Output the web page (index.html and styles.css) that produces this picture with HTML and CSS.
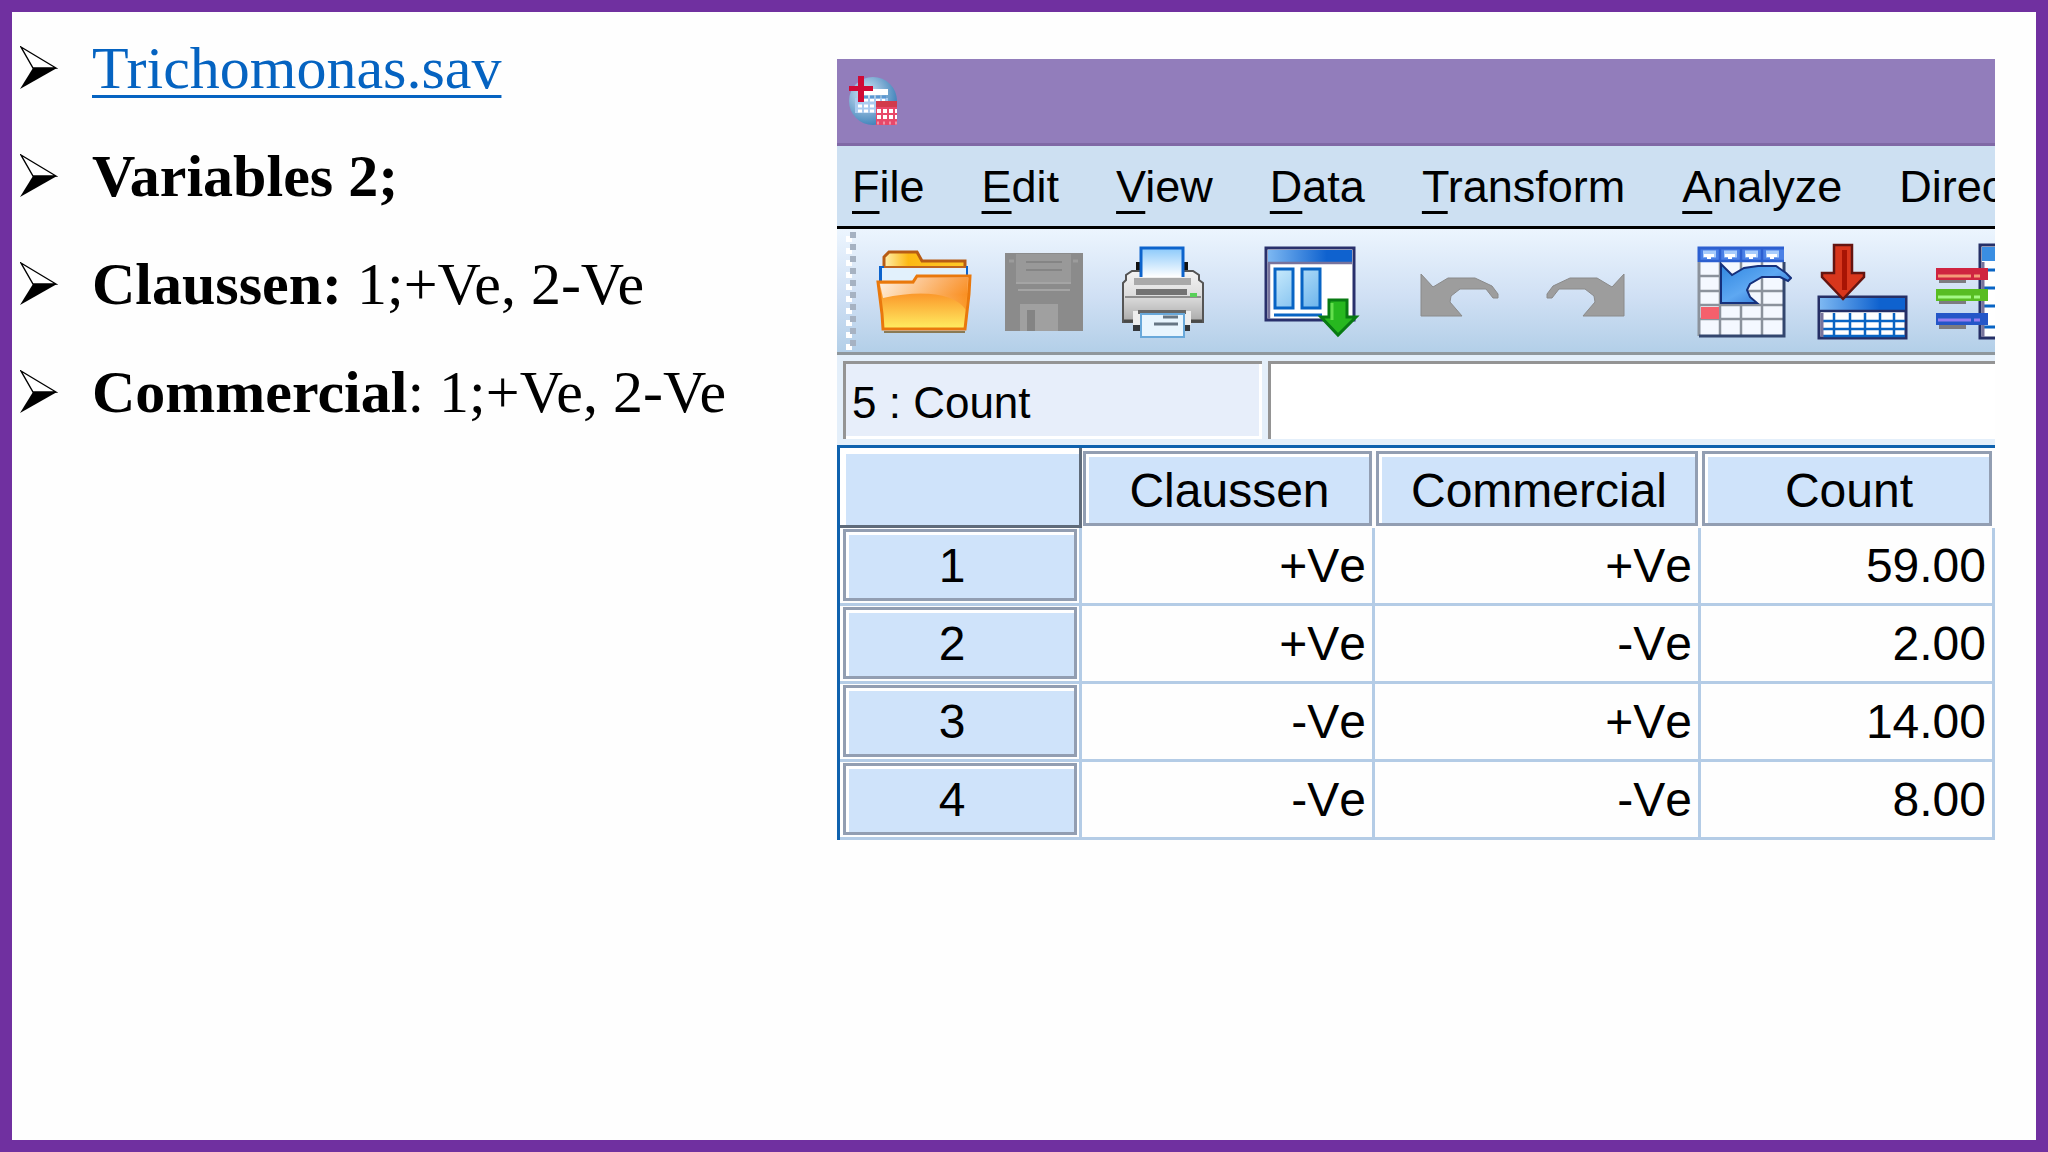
FILE: index.html
```
<!DOCTYPE html>
<html lang="en">
<head>
<meta charset="utf-8">
<title>Trichomonas.sav</title>
<link rel="stylesheet" href="styles.css">
</head>
<body>
<svg class="defs" aria-hidden="true">
  <defs>
    <symbol id="arrowhead" viewBox="0 0 38 44">
      <path d="M1 1L36 22H13Z" fill="#fff" stroke="#000" stroke-width="1.4"/>
      <path d="M13 22H37L0 43Z" fill="#000"/>
    </symbol>
    <linearGradient id="folder" x1="0" y1="0" x2="0" y2="1"><stop offset="0" stop-color="#fbc9a0"/><stop offset=".35" stop-color="#fb9a2c"/><stop offset="1" stop-color="#ffee62"/></linearGradient>
    <linearGradient id="shine" x1="0" y1="0" x2="1" y2="0"><stop offset="0" stop-color="#fff" stop-opacity=".75"/><stop offset="1" stop-color="#f98a1c" stop-opacity=".7"/></linearGradient>
    <linearGradient id="tab" x1="0" y1="0" x2="1" y2="0"><stop offset="0" stop-color="#fff0b0"/><stop offset=".3" stop-color="#fdb913"/><stop offset="1" stop-color="#ffc928"/></linearGradient>
    <linearGradient id="paper" x1="0" y1="0" x2="0" y2="1"><stop offset="0" stop-color="#8fcbfb"/><stop offset="1" stop-color="#fff"/></linearGradient>
    <linearGradient id="metal" x1="0" y1="0" x2="0" y2="1"><stop offset="0" stop-color="#f4f4f4"/><stop offset=".5" stop-color="#dcdcdc"/><stop offset="1" stop-color="#a9a9a9"/></linearGradient>
    <linearGradient id="bar" x1="0" y1="0" x2="1" y2="0"><stop offset="0" stop-color="#7db8f2"/><stop offset=".7" stop-color="#0f62cf"/></linearGradient>
    <linearGradient id="pane" x1="0" y1="0" x2="1" y2="1"><stop offset="0" stop-color="#c8eafc"/><stop offset="1" stop-color="#6cb4ec"/></linearGradient>
    <linearGradient id="swoop" x1="0" y1="0" x2="1" y2="1"><stop offset="0" stop-color="#2f86e0"/><stop offset=".5" stop-color="#5ea8f2"/><stop offset="1" stop-color="#1c62c8"/></linearGradient>
    <radialGradient id="globe" cx=".35" cy=".35" r=".7"><stop offset="0" stop-color="#d6e8f6"/><stop offset="1" stop-color="#3a7fb8"/></radialGradient>
  </defs>
</svg>
<main class="slide">
  <ul class="notes">
    <li><svg class="bullet" aria-hidden="true"><use href="#arrowhead"/></svg><span><a href="Trichomonas.sav">Trichomonas.sav</a></span></li>
    <li><svg class="bullet" aria-hidden="true"><use href="#arrowhead"/></svg><span><b>Variables 2;</b></span></li>
    <li><svg class="bullet" aria-hidden="true"><use href="#arrowhead"/></svg><span><b>Claussen:</b> 1;+Ve, 2-Ve</span></li>
    <li><svg class="bullet" aria-hidden="true"><use href="#arrowhead"/></svg><span><b>Commercial</b>: 1;+Ve, 2-Ve</span></li>
  </ul>

  <section class="window">
    <header class="titlebar">
      <svg width="48" height="50" viewBox="0 0 48 50" aria-hidden="true">
        <circle cx="24" cy="25" r="24" fill="url(#globe)"/>
        <path d="M6 22H39V37H6Z" fill="#a9cbf0"/>
        <path d="M15 13H39V19H15Z" fill="#fff"/>
        <path d="M9 24H36M9 30H30M9 35H26" stroke="#fff" stroke-width="3" stroke-dasharray="4 2"/>
        <path d="M15 21H37" stroke="#5b97d2" stroke-width="3" stroke-dasharray="4 2"/>
        <path d="M0 10H9V0H15V10H24V15H15V26H9V15H0Z" fill="#d00a35"/>
        <path d="M27 25H48V49H27Z" fill="#e8486a"/>
        <path d="M27 25H48V31H27Z" fill="#d23a4c"/>
        <path d="M28 35H48M28 41H48" stroke="#fff" stroke-width="4" stroke-dasharray="4 2"/>
        <path d="M28 47H48" stroke="#fff" stroke-opacity=".4" stroke-width="3" stroke-dasharray="2 4"/>
      </svg>
    </header>
    <nav class="menubar">
      <button type="button"><u>F</u>ile</button>
      <button type="button"><u>E</u>dit</button>
      <button type="button"><u>V</u>iew</button>
      <button type="button"><u>D</u>ata</button>
      <button type="button"><u>T</u>ransform</button>
      <button type="button"><u>A</u>nalyze</button>
      <button type="button">Direct</button>
    </nav>
    <div class="toolbar">
      <span class="grip"></span>
      <div class="group">
        <button type="button" aria-label="Open"><svg viewBox="0 0 96 100">
          <path d="M8 29V17L13 12H41L46 21H89V29Z" fill="url(#tab)" stroke="#b85c14" stroke-width="3"/>
          <path d="M3 26H92V42H3Z" fill="#0c63cc"/><path d="M6 28H90V46H6Z" fill="#e2f1fc"/>
          <path d="M8 27H90" stroke="#c0651c" stroke-width="2"/>
          <path d="M8 92H89" stroke="#8a7a55" stroke-width="2"/>
          <path d="M2 42H37L41 36H94L93 54L89 89H7L6 74Z" fill="url(#folder)" stroke="#e9780c" stroke-width="3"/>
          <path d="M4 44H38L42 38H92L90 70C78 52 44 50 7 58Z" fill="url(#shine)"/>
        </svg></button>
        <button type="button" aria-label="Save" disabled><svg viewBox="0 0 96 100">
          <path d="M9 13H87V91H9Z" fill="#8b8b8b"/>
          <path d="M20 14H75V43H20Z" fill="#999"/><path d="M20 43H75M22 50H74" stroke="#a4a4a4" stroke-width="2"/>
          <path d="M30 22H66M30 30H66" stroke="#858585" stroke-width="2"/>
          <path d="M13 21H18M77 21H82" stroke="#9c9c9c" stroke-width="3"/>
          <path d="M24 64H62V91H24Z" fill="#a0a0a0"/><path d="M31 70H39V91H31Z" fill="#848484"/>
        </svg></button>
        <button type="button" aria-label="Print"><svg viewBox="0 0 96 100">
          <path d="M20 22H72V34H20Z" fill="#111"/>
          <path d="M7 43L10 40V35L16 31H77L83 35V40L87 43V82H7Z" fill="url(#metal)" stroke="#555" stroke-width="2"/>
          <path d="M18 38H75V45H18Z" fill="#a9a9a9"/>
          <path d="M25 9H67V37H25Z" fill="url(#paper)"/><path d="M25 37V8H67V37" fill="none" stroke="#0c63cc" stroke-width="3"/>
          <path d="M20 49H71V55H20Z" fill="#737373"/><path d="M9 57H85" stroke="#8e8e8e" stroke-width="2"/>
          <path d="M74 53H81V57H74Z" fill="#58d058"/>
          <path d="M8 81H86" stroke="#4a4a48" stroke-width="3"/>
          <path d="M17 71H75V85H17Z" fill="#eee"/><path d="M22 70H70V74H22Z" fill="#666"/>
          <path d="M17 85H24V91H17ZM68 85H74V91H68Z" fill="#34383c"/>
          <path d="M25 74H68V97H25Z" fill="#e8f5fe" stroke="#68a8da" stroke-width="2"/>
          <path d="M47 77H62M38 84H62" stroke="#667684" stroke-width="3"/>
        </svg></button>
      </div>
      <div class="group">
        <button type="button" aria-label="Recall dialog"><svg viewBox="0 0 96 100">
          <path d="M2 8H90V80H2Z" fill="#fff" stroke="#29306c" stroke-width="3"/>
          <path d="M4 10H88V22H4Z" fill="url(#bar)"/><path d="M4 23H88M5 23V79" stroke="#77739c" stroke-width="2.5"/>
          <path d="M11 29H29V68H11ZM38 29H56V68H38Z" fill="url(#pane)" stroke="#0864c4" stroke-width="3"/>
          <path d="M10 75H58" stroke="#0864c4" stroke-width="3"/>
          <path d="M65 60H83V77H92L74 95L57 77H65Z" fill="#27b81f" stroke="#087a12" stroke-width="3"/>
          <path d="M68 63V80" stroke="#63df4d" stroke-width="3"/>
        </svg></button>
      </div>
      <div class="group history">
        <button type="button" aria-label="Undo" disabled><svg viewBox="0 0 96 100">
          <path d="M5 34L17 47L32 38H59L76 46L82 54V58H77L70 49H44L35 56L34 62L46 76H5Z" fill="#9d9d9d" stroke="#8a8a8a"/>
        </svg></button>
        <button type="button" aria-label="Redo" disabled><svg viewBox="0 0 96 100">
          <path d="M88 34L76 47L61 38H34L17 46L11 54V58H16L23 49H49L58 56L59 62L47 76H88Z" fill="#9d9d9d" stroke="#8a8a8a"/>
        </svg></button>
      </div>
      <div class="group">
        <button type="button" aria-label="Go to case"><svg viewBox="0 0 96 100">
          <path d="M3 8H88V96H3Z" fill="#f4f8ff"/><path d="M3 8H88V22H3Z" fill="#4a80e6"/>
          <path d="M7 14H20M28 14H41M49 14H62M70 14H83" stroke="#a9cdfb" stroke-width="7"/>
          <path d="M8 14H18V17H15V19H11V17H8ZM29 14H39V17H36V19H32V17H29ZM50 14H60V17H57V19H53V17H50ZM71 14H81V17H78V19H74V17H71Z" fill="#fff"/>
          <path d="M24 22V96M45 22V96M66 22V96M3 36H88M3 51H88M3 65H88M3 79H88" stroke="#8b929c" stroke-width="2.5"/>
          <path d="M24 8V22M45 8V22M66 8V22M3 21H88" stroke="#2c5fd0" stroke-width="2.5"/>
          <path d="M5 67H23V79H5Z" fill="#f4606c"/>
          <path d="M3 96V22" stroke="#8b929c" stroke-width="3"/><path d="M3 22V8H88" fill="none" stroke="#2c5fd0" stroke-width="3"/>
          <path d="M88 22V96H3" fill="none" stroke="#33466e" stroke-width="3"/>
          <path d="M25 24L36 35L48 28L62 26H80L90 33L95 38L92 41L84 37L66 37L54 44L51 50L54 57L61 63H25Z" fill="url(#swoop)" stroke="#15307c" stroke-width="2"/>
        </svg></button>
        <button type="button" aria-label="Go to variable"><svg viewBox="0 0 96 100">
          <path d="M3 57H90V98H3Z" fill="#fff" stroke="#252f66" stroke-width="3"/>
          <path d="M4 58H89V70H4Z" fill="url(#bar)"/><path d="M4 71H89" stroke="#252f66" stroke-width="2.5"/>
          <path d="M18 73V97M34 73V97M49 73V97M64 73V97M78 73V97M7 81H89M7 89H89M7 96H89" stroke="#0864c4" stroke-width="2.5"/>
          <path d="M6 73V97" stroke="#77739c" stroke-width="3"/>
          <path d="M18 5H36V33H48V37L27 59L6 37V33H18Z" fill="#d8361c" stroke="#641410" stroke-width="2.5"/>
          <path d="M26 10H31V50H26Z" fill="#a81404"/>
        </svg></button>
        <button type="button" aria-label="Variables"><svg viewBox="0 0 96 100">
          <path d="M44 5H95V98H44Z" fill="#fff" stroke="#252f66" stroke-width="3"/>
          <path d="M46 7H94V21H46Z" fill="#3a8ee2"/>
          <path d="M47 30H94M47 48H94M47 66H94M47 87H94" stroke="#0864c4" stroke-width="3"/>
          <path d="M47 22V97" stroke="#77739c" stroke-width="3"/>
          <path d="M3 41H30M3 62H30M3 87H30" stroke="#7c7c80" stroke-width="4"/>
          <path d="M0 28H52V40H0Z" fill="#cf2440"/><path d="M0 49H52V61H0Z" fill="#58bd22"/><path d="M0 73H52V85H0Z" fill="#2456c8"/>
          <path d="M2 36H35M38 36H44" stroke="#f59a78" stroke-width="3"/>
          <path d="M2 57H35M38 57H44" stroke="#a4f884" stroke-width="3"/>
          <path d="M2 80H35M38 80H44" stroke="#947cf0" stroke-width="3"/>
        </svg></button>
      </div>
    </div>
    <div class="cellbar">
      <input class="cell-name" type="text" aria-label="Active cell" value="5 : Count" readonly>
      <input class="cell-value" type="text" aria-label="Cell value">
    </div>
    <table class="data">
      <colgroup><col class="c-index"><col class="c-claussen"><col class="c-commercial"><col class="c-count"></colgroup>
      <thead>
        <tr><td class="corner"></td><th scope="col"><div>Claussen</div></th><th scope="col"><div>Commercial</div></th><th scope="col"><div>Count</div></th></tr>
      </thead>
      <tbody>
        <tr><th scope="row"><div>1</div></th><td>+Ve</td><td>+Ve</td><td>59.00</td></tr>
        <tr><th scope="row"><div>2</div></th><td>+Ve</td><td>-Ve</td><td>2.00</td></tr>
        <tr><th scope="row"><div>3</div></th><td>-Ve</td><td>+Ve</td><td>14.00</td></tr>
        <tr><th scope="row"><div>4</div></th><td>-Ve</td><td>-Ve</td><td>8.00</td></tr>
      </tbody>
    </table>
  </section>
</main>
</body>
</html>
```
FILE: styles.css
```
* { box-sizing: border-box; }

body {
  margin: 0;
  background: #fefefe;
  color: #000;
}

.defs {
  position: absolute;
  width: 0;
  height: 0;
}

.slide {
  display: grid;
  grid-template-columns: 825fr 1158fr;
  align-items: start;
  min-height: 100vh;
  padding-right: 41px;
  border: 12px solid #7030a0;
}

/* Notes */
.notes {
  margin: 0;
  padding: 2px 0 0 8px;
  list-style: none;
  font: 60px/108px "Liberation Serif", "Times New Roman", serif;
}

.notes li {
  display: flex;
  align-items: center;
  gap: 34px;
}

.bullet {
  flex: none;
  width: 38px;
  height: 44px;
}

.notes a {
  color: #0563c1;
  text-decoration-thickness: 3px;
  text-underline-offset: 7px;
}

/* Data editor window */
.window {
  min-width: 0;
  margin-top: 47px;
  overflow: hidden;
  background: #fefefe;
  font-family: "Liberation Sans", Arial, sans-serif;
}

.window button {
  flex: none;
  padding: 0;
  border: 0;
  background: none;
  color: inherit;
  font: inherit;
}

.titlebar {
  height: 87px;
  padding: 17px 12px;
  border-bottom: 3px solid #8069a6;
  background: #927dbb;
}

.titlebar svg { display: block; }

.menubar {
  display: flex;
  gap: 57px;
  height: 83px;
  padding: 7px 0 0 15px;
  border-bottom: 3px solid #000;
  background: #cde0f2;
  font-size: 45px;
  line-height: 68px;
  white-space: nowrap;
  overflow: hidden;
}

.menubar button { height: 68px; }

.menubar u {
  text-decoration-thickness: 3px;
  text-underline-offset: 9px;
  text-decoration-skip-ink: none;
}

.toolbar {
  display: flex;
  gap: 52px;
  height: 126px;
  padding: 11px 0 0 9px;
  border-bottom: 3px solid #8f979c;
  background: linear-gradient(#ecf5fe, #d0e0f4 55%, #b3cfe8);
  overflow: hidden;
}

.grip {
  flex: none;
  width: 10px;
  height: 118px;
  margin: -8px -32px 0 0;
  background:
    repeating-linear-gradient(#a6b2c2 0 6px, transparent 6px 12px) 4px 0 / 6px 100% no-repeat,
    repeating-linear-gradient(#fff 0 6px, transparent 6px 12px) 0 4px / 6px 100% no-repeat;
}

.group {
  display: flex;
  flex: none;
  gap: 24px;
}

.history { padding: 0 12px 0 4px; }

.toolbar button {
  width: 96px;
  height: 100px;
}

.toolbar svg {
  display: block;
  width: 96px;
  height: 100px;
}

.cellbar {
  display: flex;
  gap: 6px;
  height: 90px;
  padding: 6px 0 6px 6px;
  background: #e4effa;
}

.cellbar input {
  min-width: 0;
  height: 78px;
  padding: 2px 6px 0;
  border: solid #949494;
  border-width: 3px 0 0 3px;
  border-radius: 0;
  box-shadow: inset -3px -3px #fff;
  background: #fff;
  color: #000;
  font: 44px "Liberation Sans", Arial, sans-serif;
  outline: 0;
}

.cellbar .cell-name {
  flex: 0 0 36.4%;
  background: #e7eefa;
}

.cellbar .cell-value { flex: 1; }

/* Data grid */
.data {
  width: 100%;
  border: solid #0f62ae;
  border-width: 3px 0 0 3px;
  border-spacing: 0;
  table-layout: fixed;
  font-size: 48px;
  line-height: 54px;
  font-kerning: none;
}

.c-index { width: 242px; }
.c-claussen { width: 293px; }
.c-commercial { width: 326px; }
.c-count { width: 294px; }

.data th,
.data td {
  padding: 0;
  font-weight: 400;
}

.data thead th {
  height: 80px;
  padding: 3px 3px 2px 1px;
}

.data th div {
  display: flex;
  align-items: center;
  justify-content: center;
  border: 3px solid #929eb2;
  box-shadow: inset 3px 3px #fff;
  background: #cfe3fa;
}

.data thead div {
  height: 75px;
  padding: 5px 0 0 4px;
}

.data .corner {
  border: solid #5f6b7a;
  border-width: 0 3px 3px 0;
  background: #cfe3fa;
  box-shadow: inset 6px 6px #fff;
}

.data tbody th,
.data tbody td {
  height: 78px;
  border: solid #b4cce6;
  border-width: 0 3px 3px 0;
}

.data tbody th { padding: 0 2px 2px 3px; }

.data tbody div {
  height: 72px;
  padding: 3px 16px 0 0;
}

.data tbody td {
  padding-right: 6px;
  text-align: right;
}
```
